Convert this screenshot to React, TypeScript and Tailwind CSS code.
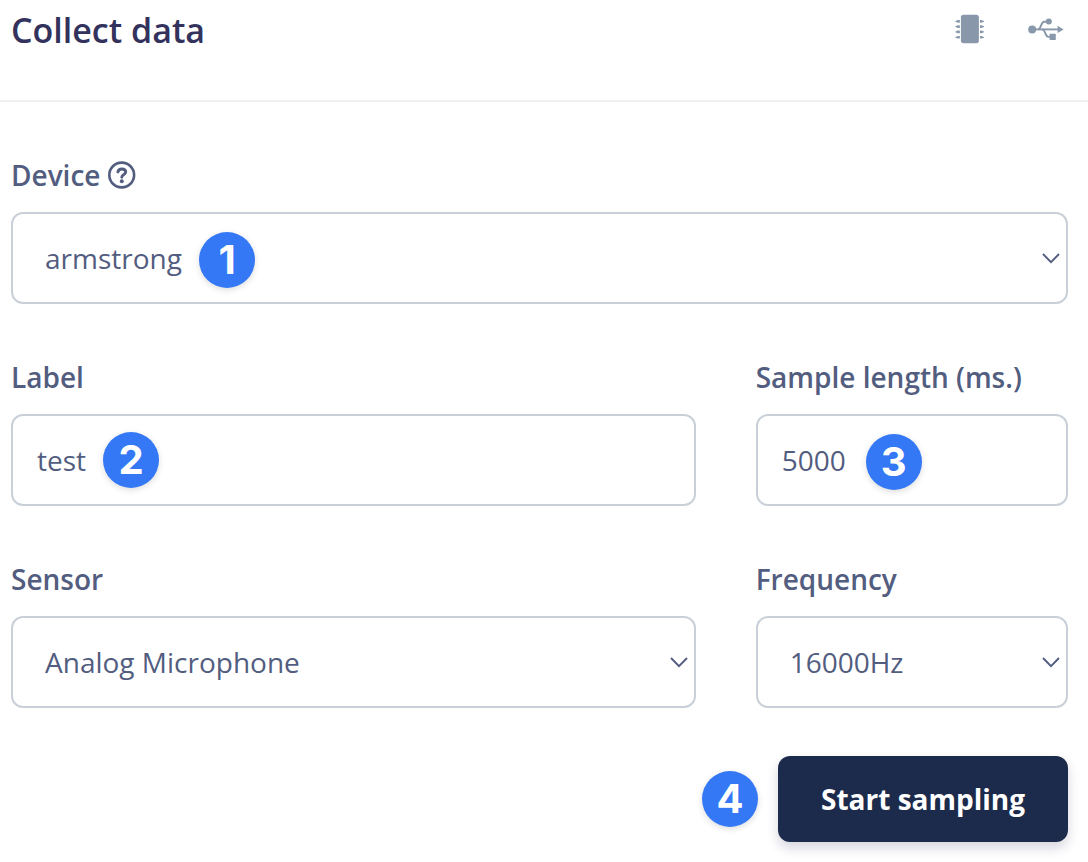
import React, { useState } from 'react';

const ChipIcon = () => (
  <svg viewBox="0 0 30 30" className="w-[30px] h-[30px]" fill="currentColor" aria-hidden="true">
    <rect x="6.9" y="0.8" width="18" height="28.4" rx="2.6" />
    {[7.4, 12.6, 17.9, 23.3].map((y) => (
      <g key={y}>
        <path d={`M5.8 ${y - 1.3}H4L1.4 ${y - 0.4}V${y + 0.4}L4 ${y + 1.3}H5.8Z`} />
        <path d={`M26 ${y - 1.3}H27.4L30 ${y - 0.4}V${y + 0.4}L27.4 ${y + 1.3}H26Z`} />
      </g>
    ))}
  </svg>
);

const UsbIcon = () => (
  <svg viewBox="0 0 36 24" className="w-9 h-6" fill="currentColor" aria-hidden="true">
    <circle cx="4.2" cy="12.4" r="4" />
    <path d="M29.6 8.8L35.6 12.4L29.6 16Z" />
    <circle cx="20.8" cy="4.6" r="3" />
    <rect x="21.6" y="16.8" width="6.2" height="6.2" rx="0.4" />
    <g fill="none" stroke="currentColor" strokeWidth="1.9">
      <path d="M6 12.4H31" />
      <path d="M10 12.4C13.4 12.4 12.6 4.8 16.2 4.8H19" />
      <path d="M14 12.4C17.8 12.4 16.8 19.9 20.5 19.9H23" />
    </g>
  </svg>
);

const HelpIcon = () => (
  <svg viewBox="0 0 28 28" className="w-7 h-7" fill="none" stroke="currentColor" aria-hidden="true">
    <circle cx="13.7" cy="14" r="12.4" strokeWidth="2.6" />
    <path d="M9.9 10.9C10.4 8.9 11.8 8 13.8 8C16.2 8 17.7 9.2 17.7 11.1C17.7 13.6 13.8 13.7 13.8 16.2" strokeWidth="2.9" strokeLinecap="round" />
    <circle cx="13.8" cy="20.2" r="2" fill="currentColor" stroke="none" />
  </svg>
);

const Badge = ({ value }: { value: number }) => (
  <span className="flex h-14 w-14 items-center justify-center rounded-full bg-[#3478f6] font-['Inter',sans-serif] text-[40px] leading-none font-bold text-white shadow-[0_2px_6px_rgba(0,0,0,0.14)]">
    {value}
  </span>
);

const labelClass = 'text-[28px] leading-[38px] font-semibold text-[#525d7f]';
const fieldClass =
  'block w-full h-[92px] rounded-xl border-2 border-[#cad0d7] bg-white text-[28px] text-[#525d7f] outline-none focus:border-[#3478f6]';

interface SelectFieldProps {
  id: string;
  value: string;
  options: string[];
  onChange: (value: string) => void;
}

const SelectField: React.FC<SelectFieldProps> = ({ id, value, options, onChange }) => (
  <>
    <select
      id={id}
      value={value}
      onChange={(e) => onChange(e.target.value)}
      className={`${fieldClass} appearance-none pl-8 pr-12`}
    >
      {options.map((option) => (
        <option key={option}>{option}</option>
      ))}
    </select>
    <div className="pointer-events-none absolute inset-y-0 right-2 flex items-center">
      <svg viewBox="0 0 18 12" className="w-[18px] h-3 text-[#525d7f]" fill="none" stroke="currentColor" strokeWidth="1.9" aria-hidden="true">
        <path d="M1 2L9 10.2L17 2" />
      </svg>
    </div>
  </>
);

export default function App() {
  const [device, setDevice] = useState('armstrong');
  const [label, setLabel] = useState('test');
  const [sampleLength, setSampleLength] = useState('5000');
  const [sensor, setSensor] = useState('Analog Microphone');
  const [frequency, setFrequency] = useState('16000Hz');

  return (
    <div className="min-h-screen bg-white font-['Open_Sans',sans-serif]">
      <header className="flex items-start justify-between border-b-2 border-[#f0f0f1] pb-10 pl-[11px] pr-6">
        <h1 className="text-[34px] leading-[60px] font-semibold text-[#32325d]">Collect data</h1>
        <div className="flex h-[58px] items-center gap-11 text-[#8898aa]">
          <button type="button" aria-label="Connected device">
            <ChipIcon />
          </button>
          <button type="button" aria-label="Connect using WebUSB">
            <UsbIcon />
          </button>
        </div>
      </header>

      <form className="pt-[54px] pl-[11px] pr-5 pb-5" onSubmit={(e) => e.preventDefault()}>
        <div className="grid grid-cols-12 gap-x-[60px] gap-y-[54px]">
          <div className="col-span-12">
            <div className="mb-[18px] flex items-center gap-2">
              <label htmlFor="device" className={labelClass}>Device</label>
              <button type="button" aria-label="About devices" className="text-[#525d7f]">
                <HelpIcon />
              </button>
            </div>
            <div className="relative">
              <SelectField id="device" value={device} options={['armstrong']} onChange={setDevice} />
              <div className="pointer-events-none absolute top-5 left-[188px]">
                <Badge value={1} />
              </div>
            </div>
          </div>

          <div className="col-span-8">
            <label htmlFor="label" className={`${labelClass} mb-[18px] block`}>Label</label>
            <div className="relative">
              <input
                id="label"
                type="text"
                value={label}
                onChange={(e) => setLabel(e.target.value)}
                className={`${fieldClass} px-6`}
              />
              <div className="pointer-events-none absolute top-[18px] left-[92px]">
                <Badge value={2} />
              </div>
            </div>
          </div>

          <div className="col-span-4">
            <label htmlFor="sample-length" className={`${labelClass} mb-[18px] block whitespace-nowrap`}>Sample length (ms.)</label>
            <div className="relative">
              <input
                id="sample-length"
                type="text"
                inputMode="numeric"
                value={sampleLength}
                onChange={(e) => setSampleLength(e.target.value)}
                className={`${fieldClass} px-6`}
              />
              <div className="pointer-events-none absolute top-5 left-[110px]">
                <Badge value={3} />
              </div>
            </div>
          </div>

          <div className="col-span-8">
            <label htmlFor="sensor" className={`${labelClass} mb-[18px] block`}>Sensor</label>
            <div className="relative">
              <SelectField id="sensor" value={sensor} options={['Analog Microphone']} onChange={setSensor} />
            </div>
          </div>

          <div className="col-span-4">
            <label htmlFor="frequency" className={`${labelClass} mb-[18px] block`}>Frequency</label>
            <div className="relative">
              <SelectField id="frequency" value={frequency} options={['16000Hz']} onChange={setFrequency} />
            </div>
          </div>
        </div>

        <div className="mt-12 flex items-center justify-end gap-5">
          <Badge value={4} />
          <button
            type="submit"
            className="h-[86px] rounded-xl bg-[#1c2b4b] px-[43px] text-[28px] font-bold text-white shadow-[0_6px_12px_rgba(50,50,93,0.2)] hover:bg-[#24365c]"
          >
            Start sampling
          </button>
        </div>
      </form>
    </div>
  );
}
